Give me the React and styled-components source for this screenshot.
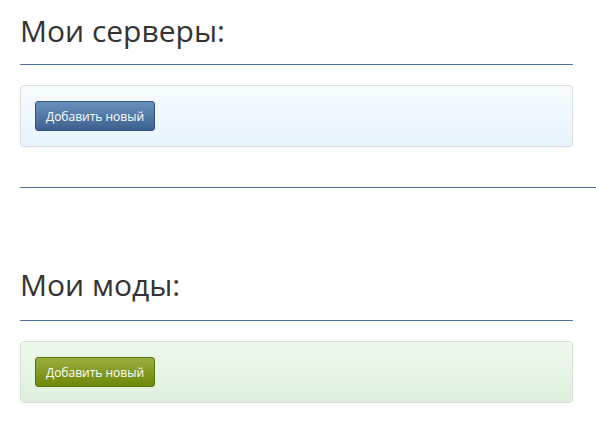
import React from 'react';
import styled, { createGlobalStyle } from 'styled-components';

const GlobalStyle = createGlobalStyle`
  html, body {
    margin: 0;
    padding: 0;
    background: #fff;
    overflow: hidden;
  }
  body {
    font-family: "Open Sans", "Liberation Sans", sans-serif;
    color: #333;
  }
`;

const Page = styled.div`
  width: 553px;
  padding: 0 20px;
`;

const Section = styled.section`
  display: flex;
  flex-direction: column;
`;

const Title = styled.h1`
  margin: ${({ $top }) => $top}px 0 0;
  font-size: 30px;
  line-height: 33px;
  font-weight: 400;
  color: #333;
`;

const Rule = styled.div`
  height: 1px;
  background: #4a72a0;
  margin-top: ${({ $top }) => $top}px;
`;

const WideRule = styled.div`
  height: 1px;
  background: #4a72a0;
  margin: 40px -23px 0 0;
`;

const Panel = styled.div`
  margin-top: 20px;
  padding: 15px 14px;
  border: 1px solid ${({ $tone }) => ($tone === 'green' ? '#d6e2d4' : '#d9dfe3')};
  border-radius: 4px;
  background: ${({ $tone }) =>
    $tone === 'green'
      ? 'linear-gradient(to bottom, #eef9ee, #def0dc)'
      : 'linear-gradient(to bottom, #f6fbfe, #e7f4fc)'};
  box-shadow: 0 1px 1px rgba(0, 0, 0, 0.04);
  display: flex;
`;

const Button = styled.button`
  width: 120px;
  height: 30px;
  padding: 0;
  border-radius: 3px;
  font-family: "Open Sans", "Liberation Sans", sans-serif;
  font-size: 12px;
  color: #fff;
  cursor: pointer;
  border: 1px solid ${({ $tone }) => ($tone === 'green' ? '#5d7404' : '#2f5382')};
  background: ${({ $tone }) =>
    $tone === 'green'
      ? 'linear-gradient(to bottom, #9cad40, #6c8809)'
      : 'linear-gradient(to bottom, #6b90bc, #3d618f)'};
`;

const App = () => {
  return (
    <>
      <GlobalStyle />
      <Page>
        <Section>
          <Title $top={14}>Мои серверы:</Title>
          <Rule $top={17} />
          <Panel>
            <Button>Добавить новый</Button>
          </Panel>
        </Section>
        <WideRule />
        <Section>
          <Title $top={80}>Мои моды:</Title>
          <Rule $top={19} />
          <Panel $tone="green">
            <Button $tone="green">Добавить новый</Button>
          </Panel>
        </Section>
      </Page>
    </>
  );
};

export default App;
